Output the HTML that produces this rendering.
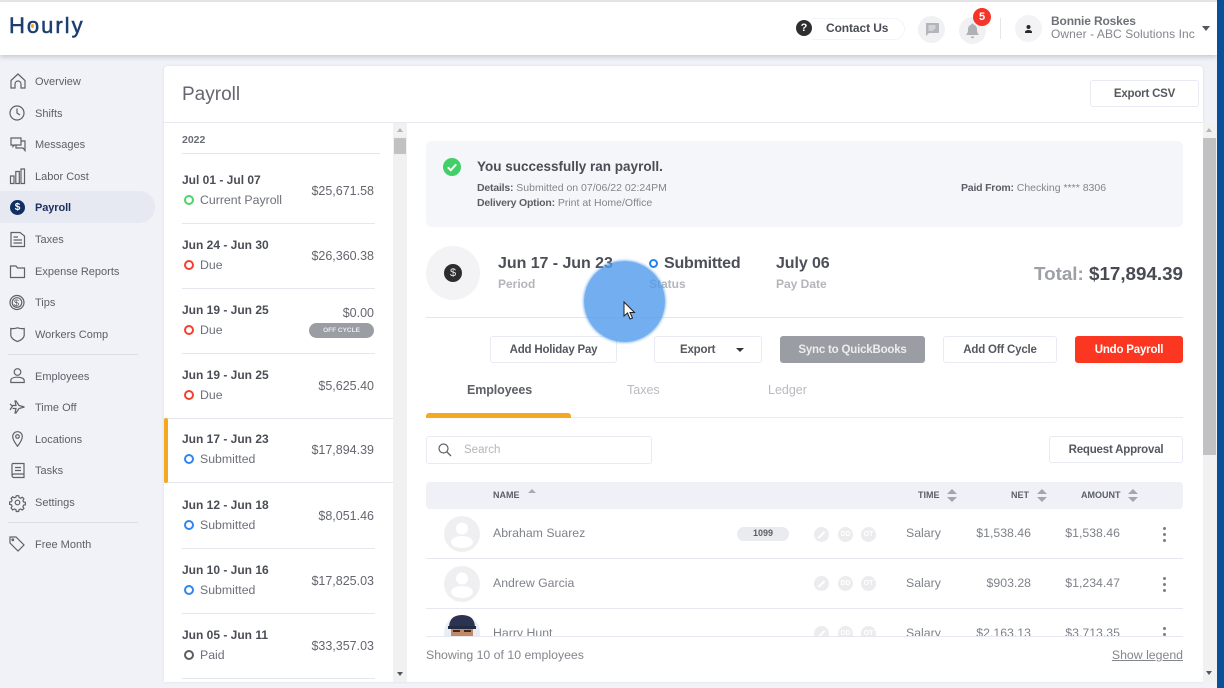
<!DOCTYPE html>
<html><head><meta charset="utf-8"><style>
html,body{margin:0;padding:0;width:1224px;height:688px;overflow:hidden;background:#f1f2f8;font-family:"Liberation Sans",sans-serif;color:#4a4e57}
div,span{box-sizing:border-box}
.a{position:absolute}
.t{position:absolute;white-space:nowrap;line-height:16px}
.n{font-size:11px;left:35px;color:#5d5f68}
.d{font-size:12px;font-weight:bold;left:182px;color:#4a4d55}
.s{font-size:12.3px;left:200px;color:#6d7079}
.m{font-size:12.5px;right:850px;color:#63666e}
.h{position:absolute;left:182px;width:193px;height:1px;background:#e6e7ee}
.c{position:absolute;left:184px;width:10px;height:10px;border-radius:50%;border:2px solid #2f86ee}
.b{position:absolute;background:#fff;border:1px solid #e8e9f2;border-radius:3px;font-size:11.5px;font-weight:bold;color:#55585f;text-align:center;height:27px;line-height:27px;white-space:nowrap;letter-spacing:-.2px}
.th{font-size:9px;font-weight:bold;color:#5b5e68}
.r{font-size:12.3px;color:#7f828a}
.o{position:absolute;width:15px;height:15px;border-radius:50%;background:#ececee;color:#fff;font:bold 7px/15px "Liberation Sans",sans-serif;text-align:center}
.o i{position:absolute;left:3px;top:6.500px;width:9px;height:2px;background:#fff;transform:rotate(-45deg)}
.k{position:absolute;left:737px;width:3px;height:3px;border-radius:50%;background:#7c7e84;box-shadow:0 6px #7c7e84,0 12px #7c7e84}
svg{position:absolute;overflow:visible}
.i{fill:none;stroke:#5f6168;stroke-width:1.2}
</style></head><body>
<!-- header -->
<div class="a" style="left:0;top:0;width:1224px;height:2px;background:#e9e9ec"></div>
<div class="a" style="left:0;top:2px;width:1217px;height:53px;background:#fff;box-shadow:0 2px 5px rgba(0,0,0,.18)"></div>
<div class="t" style="left:9px;top:13px;line-height:26px;font-size:22px;color:#1d3d72;letter-spacing:2px;-webkit-text-stroke:.5px #1d3d72">Hourly</div>
<div class="a" style="left:31px;top:24px;width:3px;height:4px;border-radius:50%;background:#f5a623"></div>
<div class="a" style="left:796px;top:20px;width:16px;height:16px;border-radius:50%;background:#2e2e30;color:#fff;font:bold 11px/16px 'Liberation Sans';text-align:center">?</div>
<div class="a" style="left:812px;top:18px;width:93px;height:22px;border:1px solid #f4f4f6;border-left:0;border-radius:0 11px 11px 0"></div>
<div class="t" style="left:826px;top:20px;font-size:12px;font-weight:bold;color:#4b4d55;letter-spacing:-.1px">Contact Us</div>
<div class="a" style="left:918px;top:16px;width:27px;height:27px;border-radius:50%;background:#f1f1f3"></div>
<svg style="left:925px;top:23px" width="14" height="13" viewBox="0 0 14 13"><path d="M1 0h12a1 1 0 0 1 1 1v8a1 1 0 0 1-1 1H4l-3 3V1a1 1 0 0 1 0-1z" fill="#b4b5ba"/><path d="M3.500 3h7M3.500 5h7M3.500 7h5" stroke="#f1f1f3" stroke-width=".9"/></svg>
<div class="a" style="left:959px;top:17px;width:27px;height:27px;border-radius:50%;background:#f1f1f3"></div>
<svg style="left:966px;top:23px" width="13" height="16" viewBox="0 0 13 16"><path d="M6.500 0.500a1.200 1.200 0 0 1 1.200 1.300c2.300.6 3.300 2.500 3.300 4.700 0 3 .8 4 2 5.500H0c1.200-1.500 2-2.500 2-5.500 0-2.200 1-4.100 3.300-4.700A1.200 1.200 0 0 1 6.500.5z" fill="#b0b1b6"/><path d="M4.800 13.500h3.400a1.700 1.700 0 0 1-3.400 0z" fill="#b0b1b6"/></svg>
<div class="a" style="left:973px;top:8px;width:18px;height:18px;border-radius:50%;background:#f4352a;color:#fff;font:bold 11px/18px 'Liberation Sans';text-align:center">5</div>
<div class="a" style="left:1000px;top:18px;width:1px;height:21px;background:#e6e6ea"></div>
<div class="a" style="left:1015px;top:15px;width:27px;height:27px;border-radius:50%;background:#f3f3f5"></div>
<svg style="left:1024px;top:25px" width="9" height="8" viewBox="0 0 9 8"><circle cx="4.500" cy="2" r="2" fill="#2a2a2c"/><path d="M1 8V7c0-1.500 2-2 3.500-2S8 5.500 8 7v1z" fill="#2a2a2c"/></svg>
<div class="t" style="left:1051px;top:13px;font-size:12px;color:#565962;font-weight:bold;opacity:.85;letter-spacing:-.15px">Bonnie Roskes</div>
<div class="t" style="left:1051px;top:26px;font-size:12px;color:#84868d;letter-spacing:.07px">Owner - ABC Solutions Inc</div>
<div class="a" style="left:1202px;top:26px;border:4px solid transparent;border-top:5px solid #55575e;border-bottom:0"></div>
<div class="a" style="left:1217px;top:0;width:7px;height:688px;background:#0a4f9a"></div>

<!-- sidebar -->
<div class="a" style="left:0;top:191px;width:155px;height:32px;background:#e6e8f2;border-radius:0 16px 16px 0"></div>
<div class="t n" style="top:74px">Overview</div>
<div class="t n" style="top:106px">Shifts</div>
<div class="t n" style="top:137px">Messages</div>
<div class="t n" style="top:169px">Labor Cost</div>
<div class="t n" style="top:200px;color:#1d2f5c;font-weight:bold;letter-spacing:-.1px">Payroll</div>
<div class="t n" style="top:232px">Taxes</div>
<div class="t n" style="top:264px">Expense Reports</div>
<div class="t n" style="top:295px">Tips</div>
<div class="t n" style="top:327px">Workers Comp</div>
<div class="t n" style="top:369px">Employees</div>
<div class="t n" style="top:400px">Time Off</div>
<div class="t n" style="top:432px">Locations</div>
<div class="t n" style="top:463px">Tasks</div>
<div class="t n" style="top:495px">Settings</div>
<div class="t n" style="top:537px">Free Month</div>
<div class="a" style="left:8px;top:354px;width:130px;height:1px;background:#dcdde5"></div>
<div class="a" style="left:8px;top:522px;width:130px;height:1px;background:#dcdde5"></div>
<svg class="i" style="left:10px;top:73px" width="16" height="16" viewBox="0 0 16 16"><path d="M1 7.500 8 1l7 6.500V15h-4v-4a3 3 0 0 0-6 0v4H1z"/></svg>
<svg class="i" style="left:9px;top:105px" width="16" height="16" viewBox="0 0 16 16"><circle cx="8" cy="8" r="7"/><path d="M8 3.500V8l3 2"/></svg>
<svg class="i" style="left:10px;top:137px" width="16" height="15" viewBox="0 0 16 15"><path d="M1 1h10v7H4.500L3 9.500V8H1zM6 8v3h7l2 2.500V4h-4"/></svg>
<svg class="i" style="left:10px;top:168px" width="15" height="16" viewBox="0 0 15 16"><path d="M.5 8h3.500v7.500H.5zM5.800 3.500h3.500v12H5.800zM11 1h3.500v14.500H11z"/></svg>
<div class="a" style="left:10px;top:200px;width:15px;height:15px;border-radius:50%;background:#12305f;color:#fff;font:bold 10px/15px 'Liberation Sans';text-align:center">$</div>
<svg class="i" style="left:10px;top:232px" width="15" height="15" viewBox="0 0 15 15"><path d="M1 .5h9L14.500 4v10.500H1zM3.500 5H8M3.500 8h8.500M3.500 11h8.500"/></svg>
<svg class="i" style="left:10px;top:265px" width="15" height="13" viewBox="0 0 15 13"><path d="M.5 1h5.500l1.500 2h7v9.500H.5z"/></svg>
<svg class="i" style="left:9px;top:295px" width="16" height="15" viewBox="0 0 16 15"><circle cx="8" cy="7.500" r="7"/><circle cx="8" cy="7.500" r="4.800"/></svg>
<div class="t" style="left:14px;top:295px;font-size:9px;color:#55575e">$</div>
<svg class="i" style="left:10px;top:327px" width="15" height="15" viewBox="0 0 15 15"><path d="M.8 1.500Q4 2 7.500.8 11 2 14.200 1.500V8c0 3-3.500 5.500-6.700 6.500C4.300 13.500.8 11 .8 8z"/></svg>
<svg class="i" style="left:10px;top:368px" width="15" height="15" viewBox="0 0 15 15"><circle cx="7.500" cy="4" r="3.300"/><path d="M.8 14.500V12.500c0-2.200 3-3.300 6.700-3.300s6.700 1.100 6.700 3.300v2z"/></svg>
<svg class="i" style="left:9px;top:400px" width="16" height="14" viewBox="0 0 16 14"><path d="M1 4l2.500 2L1 10M15.500 7 10 5.500 7 1 6 1l1 4.500H3.500M15.500 7 10 8.500 7 13H6l1-4.500H3.500"/></svg>
<svg class="i" style="left:12px;top:431px" width="11" height="16" viewBox="0 0 11 16"><path d="M5.500.7a4.800 4.800 0 0 1 4.800 4.800c0 3.500-4.800 9.700-4.800 9.700S.7 9 .7 5.500A4.800 4.800 0 0 1 5.500.7z"/><circle cx="5.500" cy="5.500" r="1.800"/></svg>
<svg class="i" style="left:11px;top:463px" width="14" height="15" viewBox="0 0 14 15"><path d="M1 12V1.500A1 1 0 0 1 2 .5h11V14.500H3A2 2 0 0 1 1 12.500 2 2 0 0 1 3 11h10M4 4.500h6M4 7.500h6"/></svg>
<svg class="i" style="left:10px;top:495px" width="15" height="15" viewBox="0 0 15 15"><circle cx="7.500" cy="7.500" r="2.300"/><path d="M6.300.7h2.400l.4 1.900 1.500.6 1.700-1 1.600 1.600-1 1.700.6 1.500 1.900.4v2.400l-1.900.4-.6 1.500 1 1.700-1.600 1.600-1.700-1-1.500.6-.4 1.900H6.300l-.4-1.900-1.500-.6-1.700 1L1.100 13l1-1.700-.6-1.500-1.900-.4V7l1.900-.4.6-1.500-1-1.700L2.700 1.800l1.700 1 1.500-.6z"/></svg>
<svg class="i" style="left:9px;top:536px" width="16" height="16" viewBox="0 0 16 16"><path d="M1 1h6l8 8-6 6-8-8z"/><circle cx="3.800" cy="3.800" r=".8"/></svg>

<!-- card -->
<div class="a" style="left:164px;top:66px;width:1039px;height:616px;background:#fff;border-radius:4px 4px 0 0;box-shadow:0 0 3px rgba(0,0,0,.08)"></div>
<div class="t" style="left:182px;top:84px;line-height:22px;font-size:19px;color:#64676f">Payroll</div>
<div class="b" style="left:1090px;top:80px;width:109px;height:27px">Export CSV</div>
<div class="a" style="left:164px;top:122px;width:1039px;height:1px;background:#e8e9f0"></div>

<!-- list -->
<div class="t" style="left:182px;top:132px;font-size:10.500px;font-weight:bold;color:#6b6e76">2022</div>
<div class="h" style="top:153px;width:198px"></div>
<div class="t d" style="top:172px">Jul 01 - Jul 07</div>
<div class="c" style="top:195px;border-color:#4ed468"></div><div class="t s" style="top:192px">Current Payroll</div>
<div class="t m" style="top:183px">$25,671.58</div>
<div class="h" style="top:223px"></div>
<div class="t d" style="top:237px">Jun 24 - Jun 30</div>
<div class="c" style="top:260px;border-color:#f4402f"></div><div class="t s" style="top:257px">Due</div>
<div class="t m" style="top:248px">$26,360.38</div>
<div class="h" style="top:288px"></div>
<div class="t d" style="top:302px">Jun 19 - Jun 25</div>
<div class="c" style="top:325px;border-color:#f4402f"></div><div class="t s" style="top:322px">Due</div>
<div class="t m" style="top:305px">$0.00</div>
<div class="a" style="left:309px;top:323px;width:65px;height:15px;border-radius:8px;background:#9a9da3;color:#e9eaec;font:bold 6.500px/15px 'Liberation Sans';text-align:center">OFF CYCLE</div>
<div class="h" style="top:353px"></div>
<div class="t d" style="top:367px">Jun 19 - Jun 25</div>
<div class="c" style="top:390px;border-color:#f4402f"></div><div class="t s" style="top:387px">Due</div>
<div class="t m" style="top:378px">$5,625.40</div>
<div class="a" style="left:164px;top:418px;width:229px;height:65px;border-top:1px solid #e6e7ee;border-bottom:1px solid #e6e7ee"></div>
<div class="a" style="left:164px;top:418px;width:4px;height:65px;background:#f7a823;border-radius:2px"></div>
<div class="t d" style="top:431px">Jun 17 - Jun 23</div>
<div class="c" style="top:454px"></div><div class="t s" style="top:451px">Submitted</div>
<div class="t m" style="top:442px">$17,894.39</div>
<div class="t d" style="top:497px">Jun 12 - Jun 18</div>
<div class="c" style="top:520px"></div><div class="t s" style="top:517px">Submitted</div>
<div class="t m" style="top:508px">$8,051.46</div>
<div class="h" style="top:548px"></div>
<div class="t d" style="top:562px">Jun 10 - Jun 16</div>
<div class="c" style="top:585px"></div><div class="t s" style="top:582px">Submitted</div>
<div class="t m" style="top:573px">$17,825.03</div>
<div class="h" style="top:613px"></div>
<div class="t d" style="top:627px">Jun 05 - Jun 11</div>
<div class="c" style="top:650px;border-color:#5a5d66"></div><div class="t s" style="top:647px">Paid</div>
<div class="t m" style="top:638px">$33,357.03</div>
<div class="h" style="top:678px"></div>
<!-- list scrollbar -->
<div class="a" style="left:393px;top:123px;width:14px;height:559px;background:#f1f1f2"></div>
<div class="a" style="left:394px;top:138px;width:12px;height:16px;background:#c1c1c3"></div>
<div class="a" style="left:397px;top:128px;border:3px solid transparent;border-bottom:4px solid #b5b5b8;border-top:0"></div>
<div class="a" style="left:397px;top:672px;border:3px solid transparent;border-top:4px solid #55575c;border-bottom:0"></div>

<!-- banner -->
<div class="a" style="left:426px;top:141px;width:757px;height:86px;background:#f5f6f9;border-radius:6px"></div>
<svg style="left:443px;top:158px" width="18" height="18" viewBox="0 0 18 18"><circle cx="9" cy="9" r="9" fill="#42cf68"/><path d="M4.800 9.300 7.800 12.200 13.200 6.300" fill="none" stroke="#fff" stroke-width="2"/></svg>
<div class="t" style="left:477px;top:159px;font-size:13.500px;font-weight:bold;color:#4a4d55">You successfully ran payroll.</div>
<div class="t" style="left:477px;top:180px;font-size:10.500px;color:#82858c"><b style="color:#5b5e66;letter-spacing:-.2px">Details:</b> Submitted on 07/06/22 02:24PM</div>
<div class="t" style="left:477px;top:195px;font-size:10.500px;color:#82858c"><b style="color:#5b5e66;letter-spacing:-.2px">Delivery Option:</b> Print at Home/Office</div>
<div class="t" style="left:961px;top:180px;font-size:10.500px;color:#82858c"><b style="color:#5b5e66;letter-spacing:-.2px">Paid From:</b> Checking **** 8306</div>

<!-- summary -->
<div class="a" style="left:426px;top:246px;width:54px;height:54px;border-radius:50%;background:#f3f3f5"></div>
<div class="a" style="left:444px;top:264px;width:18px;height:18px;border-radius:50%;background:#2d2d2f;color:#e8e8e8;font:11px/18px 'Liberation Sans';text-align:center">$</div>
<div class="t" style="left:498px;top:254px;line-height:20px;font-size:16px;font-weight:bold;color:#4c4f57;letter-spacing:-.05px">Jun 17 - Jun 23</div>
<div class="t" style="left:498px;top:276px;font-size:12px;font-weight:bold;color:#b3b5ba">Period</div>
<div class="a" style="left:649px;top:259px;width:9px;height:9px;border-radius:50%;border:2px solid #2680ee"></div>
<div class="t" style="left:664px;top:254px;line-height:20px;font-size:16px;font-weight:bold;color:#4c4f57;letter-spacing:-.2px">Submitted</div>
<div class="t" style="left:649px;top:276px;font-size:12px;font-weight:bold;color:#b3b5ba">Status</div>
<div class="t" style="left:776px;top:254px;line-height:20px;font-size:16px;font-weight:bold;color:#4c4f57;letter-spacing:-.1px">July 06</div>
<div class="t" style="left:776px;top:276px;font-size:12px;font-weight:bold;color:#b3b5ba">Pay Date</div>
<div class="t" style="right:41px;top:262px;line-height:24px;font-size:18.800px;font-weight:bold;color:#484b53;white-space:nowrap"><span style="color:#9da0a6">Total:</span> $17,894.39</div>
<div class="a" style="left:426px;top:317px;width:757px;height:1px;background:#e4e5ec"></div>

<!-- buttons -->
<div class="b" style="left:490px;top:336px;width:127px">Add Holiday Pay</div>
<div class="b" style="left:654px;top:336px;width:108px;text-align:left;padding-left:25px">Export</div>
<div class="a" style="left:736px;top:348px;border:4px solid transparent;border-top:4px solid #33353a;border-bottom:0"></div>
<div class="b" style="left:780px;top:336px;width:145px;background:#9a9da3;border-color:#9a9da3;color:#eceded">Sync to QuickBooks</div>
<div class="b" style="left:943px;top:336px;width:114px">Add Off Cycle</div>
<div class="b" style="left:1075px;top:336px;width:108px;background:#fb3722;border-color:#fb3722;color:#fff">Undo Payroll</div>

<!-- tabs -->
<div class="t" style="left:467px;top:382px;font-size:12.500px;font-weight:bold;color:#5d6068;letter-spacing:-.1px">Employees</div>
<div class="t" style="left:627px;top:382px;font-size:12.500px;color:#b8bac0">Taxes</div>
<div class="t" style="left:768px;top:382px;font-size:12.500px;color:#b8bac0">Ledger</div>
<div class="a" style="left:426px;top:417px;width:757px;height:1px;background:#e8e9f1"></div>
<div class="a" style="left:426px;top:413px;width:145px;height:5px;background:#f7a823;border-radius:3px 3px 0 0"></div>

<!-- search -->
<div class="a" style="left:426px;top:436px;width:226px;height:28px;border:1px solid #e8e9f2;border-radius:3px"></div>
<svg style="left:438px;top:443px" width="14" height="14" viewBox="0 0 14 14"><circle cx="5.500" cy="5.500" r="4.500" fill="none" stroke="#5f6168" stroke-width="1.200"/><path d="M9 9l4 4" stroke="#5f6168" stroke-width="1.300"/></svg>
<div class="t" style="left:464px;top:442px;font-size:11.500px;color:#b3b5ba">Search</div>
<div class="b" style="left:1049px;top:436px;width:134px">Request Approval</div>

<!-- table head -->
<div class="a" style="left:426px;top:482px;width:757px;height:27px;background:#f0f1f7;border-radius:4px"></div>
<div class="t th" style="left:493px;top:487px">NAME</div>
<div class="a" style="left:528px;top:489px;border:4px solid transparent;border-bottom:4px solid #a9abb1;border-top:0"></div>
<div class="t th" style="left:918px;top:487px">TIME</div>
<div class="t th" style="left:1011px;top:487px">NET</div>
<div class="t th" style="left:1081px;top:487px">AMOUNT</div>
<div class="a" style="left:947px;top:489px;border:5px solid transparent;border-bottom:5px solid #a4a6ac;border-top:0"></div>
<div class="a" style="left:947px;top:497px;border:5px solid transparent;border-top:5px solid #a4a6ac;border-bottom:0"></div>
<div class="a" style="left:1037px;top:489px;border:5px solid transparent;border-bottom:5px solid #a4a6ac;border-top:0"></div>
<div class="a" style="left:1037px;top:497px;border:5px solid transparent;border-top:5px solid #a4a6ac;border-bottom:0"></div>
<div class="a" style="left:1128px;top:489px;border:5px solid transparent;border-bottom:5px solid #a4a6ac;border-top:0"></div>
<div class="a" style="left:1128px;top:497px;border:5px solid transparent;border-top:5px solid #a4a6ac;border-bottom:0"></div>

<!-- rows, clipped -->
<div class="a" style="left:426px;top:509px;width:757px;height:127px;overflow:hidden">
<svg style="left:18px;top:7px" width="36" height="36" viewBox="0 0 36 36"><circle cx="18" cy="18" r="18" fill="#efeff1"/><circle cx="18" cy="12.500" r="6" fill="#fff" /><ellipse cx="18" cy="26" rx="11" ry="6" fill="#fff"/></svg>
<div class="t r" style="left:67px;top:16px">Abraham Suarez</div>
<div class="a" style="left:311px;top:18px;width:52px;height:14px;border-radius:7px;background:#e9ebef;color:#5b5e66;font:bold 9px/13px 'Liberation Sans';text-align:center">1099</div>
<div class="o" style="left:388px;top:18px"><i></i></div>
<div class="o" style="left:412px;top:18px">DD</div>
<div class="o" style="left:435px;top:18px">OT</div>
<div class="t r" style="left:480px;top:16px">Salary</div>
<div class="t r" style="right:152px;top:16px">$1,538.46</div>
<div class="t r" style="right:63px;top:16px">$1,538.46</div>
<div class="k" style="top:18px"></div>
<div class="a" style="left:0;top:49px;width:757px;height:1px;background:#e6e7f0"></div>

<svg style="left:18px;top:57px" width="36" height="36" viewBox="0 0 36 36"><circle cx="18" cy="18" r="18" fill="#efeff1"/><circle cx="18" cy="12.500" r="6" fill="#fff"/><ellipse cx="18" cy="26" rx="11" ry="6" fill="#fff"/></svg>
<div class="t r" style="left:67px;top:66px">Andrew Garcia</div>
<div class="o" style="left:388px;top:67px"><i></i></div>
<div class="o" style="left:412px;top:67px">DD</div>
<div class="o" style="left:435px;top:67px">OT</div>
<div class="t r" style="left:480px;top:66px">Salary</div>
<div class="t r" style="right:152px;top:66px">$903.28</div>
<div class="t r" style="right:63px;top:66px">$1,234.47</div>
<div class="k" style="top:68px"></div>
<div class="a" style="left:0;top:99px;width:757px;height:1px;background:#e6e7f0"></div>

<svg style="left:18px;top:106px" width="36" height="36" viewBox="0 0 36 36"><circle cx="18" cy="18" r="18" fill="#e8eef3"/><path d="M5 13Q5 0 18 0t13 13z" fill="#2b3350"/><rect x="4" y="11" width="28" height="3" fill="#222a44"/><path d="M7 14h22v14H7z" fill="#c08a66"/><path d="M9 16h7M20 16h7" stroke="#43281b" stroke-width="2"/></svg>
<div class="t r" style="left:67px;top:116px">Harry Hunt</div>
<div class="o" style="left:388px;top:117px"><i></i></div>
<div class="o" style="left:412px;top:117px">DD</div>
<div class="o" style="left:435px;top:117px">OT</div>
<div class="t r" style="left:480px;top:116px">Salary</div>
<div class="t r" style="right:152px;top:116px">$2,163.13</div>
<div class="t r" style="right:63px;top:116px">$3,713.35</div>
<div class="k" style="top:118px"></div>
</div>
<div class="a" style="left:426px;top:636px;width:757px;height:1px;background:#e6e7f0"></div>
<div class="t" style="left:426px;top:647px;font-size:12.300px;color:#83868d">Showing 10 of 10 employees</div>
<div class="t" style="right:41px;top:647px;font-size:12.300px;color:#83868d;text-decoration:underline">Show legend</div>

<!-- main scrollbar -->
<div class="a" style="left:1203px;top:123px;width:14px;height:559px;background:#f1f1f2"></div>
<div class="a" style="left:1203px;top:138px;width:13px;height:317px;background:#c1c1c3"></div>
<div class="a" style="left:1206px;top:128px;border:3px solid transparent;border-bottom:4px solid #b5b5b8;border-top:0"></div>
<div class="a" style="left:1206px;top:671px;border:3px solid transparent;border-top:4px solid #55575c;border-bottom:0"></div>

<!-- click highlight + cursor -->
<div class="a" style="left:584px;top:261px;width:81px;height:81px;border-radius:50%;background:rgba(80,155,236,.8);box-shadow:0 0 2px 1px rgba(80,155,236,.6)"></div>
<svg style="left:623px;top:301px" width="13" height="19" viewBox="0 0 13 19"><path d="M1 1v14l3.500-3 2.500 6 2.500-1-2.500-5.500h4.500z" fill="#fff" stroke="#222" stroke-width="1"/></svg>
</body></html>
